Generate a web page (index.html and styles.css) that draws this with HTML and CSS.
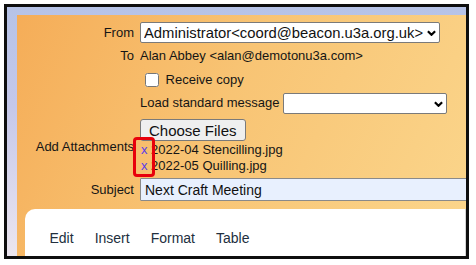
FILE: index.html
```html
<!DOCTYPE html>
<html lang="en">
<head>
  <meta charset="UTF-8">
  <title>Send Email</title>
  <link rel="stylesheet" href="styles.css">
</head>
<body>
  <div class="frame">
    <div class="panel">
      <div class="form">
        <label class="lbl">From</label>
        <div class="cell">
          <span class="select-wrap">
            <select class="from-select">
              <option>Administrator&lt;coord@beacon.u3a.org.uk&gt;</option>
            </select>
            <svg class="chevron" viewBox="0 0 10 6"><path d="M1 1 L5 5 L9 1" /></svg>
          </span>
        </div>

        <label class="lbl">To</label>
        <div class="cell">Alan Abbey &lt;alan@demotonu3a.com&gt;</div>

        <div></div>
        <div class="cell"><input type="checkbox" class="check"> Receive copy</div>

        <div></div>
        <div class="cell">Load standard message
          <span class="select-wrap">
            <select class="std-select"><option></option></select>
            <svg class="chevron" viewBox="0 0 10 6"><path d="M1 1 L5 5 L9 1" /></svg>
          </span>
        </div>

        <label class="lbl">Add Attachments</label>
        <div class="attach">
          <button class="choose">Choose Files</button>
          <div class="file"><a class="remove">x</a> 2022-04 Stencilling.jpg</div>
          <div class="file"><a class="remove">x</a> 2022-05 Quilling.jpg</div>
          <span class="highlight"></span>
        </div>

        <label class="lbl">Subject</label>
        <div class="cell"><input type="text" class="subject" value="Next Craft Meeting"></div>
      </div>

      <div class="editor">
        <div class="menubar">
          <span class="menu">Edit</span>
          <span class="menu">Insert</span>
          <span class="menu">Format</span>
          <span class="menu">Table</span>
        </div>
      </div>
    </div>
  </div>
</body>
</html>
```

FILE: styles.css
```css
body {
  margin: 0;
  font-family: "Liberation Sans", Arial, sans-serif;
  font-size: 13px;
  color: #151515;
  background: #fff;
}
.frame {
  margin: 4px 0 0 4px;
  width: 459px;
  height: 249px;
  border: 3px solid #0e0e0e;
  background: linear-gradient(to bottom, #b6c3e7 0%, #c5c8ea 40%, #ece6ef 100%);
  overflow: hidden;
}
.panel {
  margin: 8px 0 0 10px;
  height: 241px;
  background: linear-gradient(115deg, #f5ad58 0%, #f8c474 45%, #fbd68c 100%);
  overflow: hidden;
}
.form {
  display: grid;
  grid-template-columns: 117px 330px;
  grid-template-rows: 21px 25px 23px 25px 60px 27px;
  column-gap: 6px;
  padding: 7px 0 3px 0;
  align-items: center;
}
.lbl {
  text-align: right;
  white-space: nowrap;
}
.cell {
  white-space: nowrap;
}
.select-wrap {
  position: relative;
  display: inline-block;
  vertical-align: middle;
}
select {
  -webkit-appearance: none;
  appearance: none;
  display: block;
  font-family: "Liberation Sans", Arial, sans-serif;
  font-size: 14.8px;
  height: 21px;
  padding: 0 12px 0 3px;
  border: 1px solid #7a7a7a;
  border-radius: 2px;
  background: #fff;
  color: #111;
}
.chevron {
  position: absolute;
  right: 4px;
  top: 8px;
  width: 9px;
  height: 6px;
  fill: none;
  stroke: #000;
  stroke-width: 2.4;
  pointer-events: none;
}
.from-select {
  width: 300px;
}
.std-select {
  width: 164px;
}
.check {
  width: 14px;
  height: 14px;
  margin: 0 3px 0 5px;
  vertical-align: middle;
}
.attach {
  position: relative;
  align-self: start;
  padding-top: 3px;
}
.choose {
  font-family: "Liberation Sans", Arial, sans-serif;
  font-size: 15px;
  height: 22px;
  padding: 0 8px;
  margin-bottom: 1px;
  border: 1px solid #7a7a7a;
  border-radius: 3px;
  background: #efefef;
  color: #111;
}
.file {
  line-height: 16px;
  white-space: nowrap;
}
.remove {
  color: #5a3ee8;
  padding-left: 1px;
}
.highlight {
  position: absolute;
  left: -7px;
  top: 21px;
  width: 16px;
  height: 34px;
  border: 3px solid #e8000b;
  border-radius: 4px;
}
.subject {
  box-sizing: border-box;
  width: 330px;
  height: 23px;
  padding: 0 4px;
  font-family: "Liberation Sans", Arial, sans-serif;
  font-size: 14px;
  color: #111;
  background: #e8f0fe;
  border: 1px solid #8a8a8a;
  border-radius: 1px;
}
.editor {
  margin: 3px 0 0 8px;
  height: 60px;
  background: #fff;
  border-radius: 10px 0 0 0;
  border-right: 1px solid #d4d4d4;
}
.menubar {
  padding: 20px 0 0 14px;
  display: flex;
}
.menu {
  padding: 0 10.5px;
  font-size: 14px;
  line-height: 18px;
  color: #222f3e;
}
```
